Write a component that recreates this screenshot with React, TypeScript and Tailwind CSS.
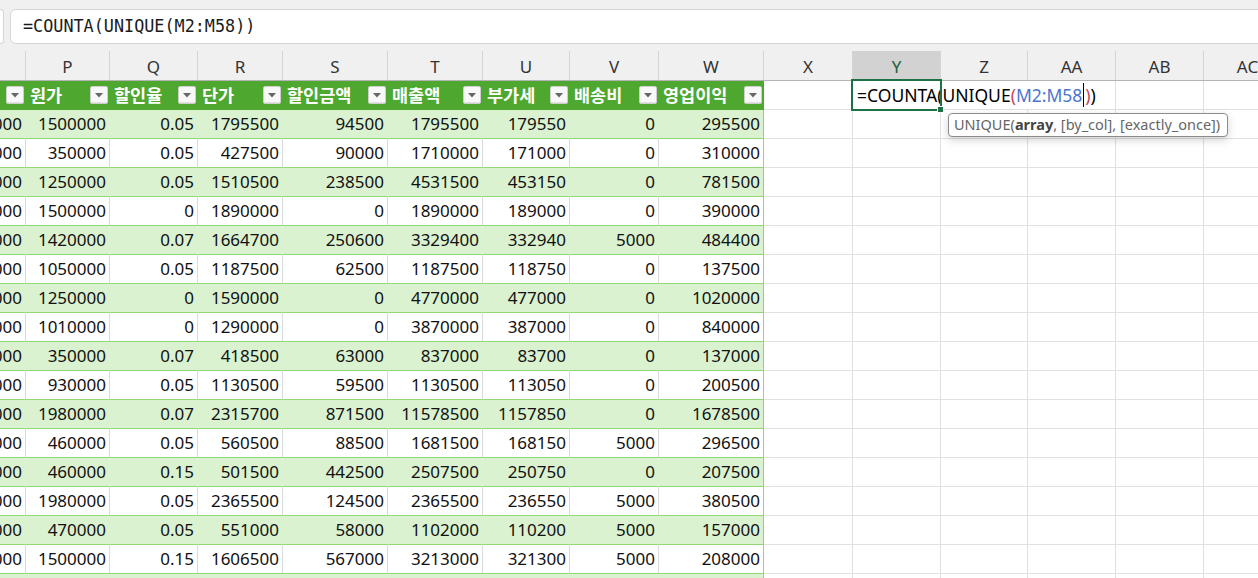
// Excel-style sheet view: formula bar, column letters, a green banded table
// with filter buttons, and an in-cell formula edit with its argument tip.

type Col = { w: string; l: string };

const COLS: Col[] = [
  { w: "w-[26px]", l: "O" },
  { w: "w-[84px]", l: "P" },
  { w: "w-[88px]", l: "Q" },
  { w: "w-[85px]", l: "R" },
  { w: "w-[105px]", l: "S" },
  { w: "w-[95px]", l: "T" },
  { w: "w-[87px]", l: "U" },
  { w: "w-[89px]", l: "V" },
  { w: "w-[105px]", l: "W" },
  { w: "w-[89px]", l: "X" },
  { w: "w-[88px]", l: "Y" },
  { w: "w-[87px]", l: "Z" },
  { w: "w-[88px]", l: "AA" },
  { w: "w-[88px]", l: "AB" },
  { w: "w-[88px]", l: "AC" },
];

const HEADERS = ["", "원가", "할인율", "단가", "할인금액", "매출액", "부가세", "배송비", "영업이익"];

// first value is the clipped column on the far left
const ROWS: string[][] = [
  ["1890000", "1500000", "0.05", "1795500", "94500", "1795500", "179550", "0", "295500"],
  ["1800000", "350000", "0.05", "427500", "90000", "1710000", "171000", "0", "310000"],
  ["1590000", "1250000", "0.05", "1510500", "238500", "4531500", "453150", "0", "781500"],
  ["1890000", "1500000", "0", "1890000", "0", "1890000", "189000", "0", "390000"],
  ["1790000", "1420000", "0.07", "1664700", "250600", "3329400", "332940", "5000", "484400"],
  ["1250000", "1050000", "0.05", "1187500", "62500", "1187500", "118750", "0", "137500"],
  ["1590000", "1250000", "0", "1590000", "0", "4770000", "477000", "0", "1020000"],
  ["1290000", "1010000", "0", "1290000", "0", "3870000", "387000", "0", "840000"],
  ["450000", "350000", "0.07", "418500", "63000", "837000", "83700", "0", "137000"],
  ["1190000", "930000", "0.05", "1130500", "59500", "1130500", "113050", "0", "200500"],
  ["2490000", "1980000", "0.07", "2315700", "871500", "11578500", "1157850", "0", "1678500"],
  ["590000", "460000", "0.05", "560500", "88500", "1681500", "168150", "5000", "296500"],
  ["590000", "460000", "0.15", "501500", "442500", "2507500", "250750", "0", "207500"],
  ["2490000", "1980000", "0.05", "2365500", "124500", "2365500", "236550", "5000", "380500"],
  ["580000", "470000", "0.05", "551000", "58000", "1102000", "110200", "5000", "157000"],
  ["1890000", "1500000", "0.15", "1606500", "567000", "3213000", "321300", "5000", "208000"],
  ["1590000", "", "", "", "", "", "", "", ""],
];

function FilterButton() {
  return (
    <div className="absolute right-[1px] top-[5px] flex h-[18px] w-[18px] items-center justify-center rounded-[2px] border border-[#cfcfcf] bg-[#f8f8f8] shadow-[inset_0_-1px_0_#e2e2e2]">
      <svg width="8" height="5" viewBox="0 0 8 5">
        <path d="M0 0 L8 0 L4 4.5 Z" fill="#666" />
      </svg>
    </div>
  );
}

function ColumnLetters() {
  return (
    <div className="flex h-[30px] border-b border-[#b4b4b4] bg-[#f0f0f0]">
      {COLS.map((c) => (
        <div
          key={c.l}
          className={
            c.w +
            " flex shrink-0 items-center justify-center overflow-hidden whitespace-nowrap border-r border-[#d4d4d4] pt-[2px] text-[17px] " +
            (c.l === "Y" ? "bg-[#d2d2d2] text-[#215f3d]" : "text-[#333]")
          }
        >
          {c.l === "O" ? "" : c.l}
        </div>
      ))}
    </div>
  );
}

function EditingCell() {
  return (
    <div className="relative z-10 h-full">
      <span className="absolute left-0 top-0 flex h-[28px] items-center whitespace-nowrap bg-white pl-[4px] pr-[6px] text-[17.5px] text-black">
        =COUNTA(UNIQUE<span className="text-[#c8465a]">(</span>
        <span className="text-[#4c74cf]">M2:M58</span>
        <span className="mx-[1px] inline-block h-[24px] w-px bg-black" />
        <span className="text-[#c8465a]">)</span>)
      </span>
      <div className="absolute -left-[2px] -top-[2px] h-[32px] w-[91px] border-2 border-[#1e7145]">
        <div className="absolute -bottom-[4px] -right-[4px] h-[7px] w-[7px] border border-white bg-[#1e7145]" />
      </div>
    </div>
  );
}

function HeaderRow() {
  return (
    <div className="flex h-[29px]">
      {COLS.map((c, j) =>
        j <= 8 ? (
          <div
            key={c.l}
            className={
              c.w +
              " relative flex shrink-0 items-center overflow-hidden border-b border-r border-[#4ea72e] bg-[#4ea72e] pl-[4px] font-['Noto_Sans_CJK_KR',sans-serif] text-[17.5px] font-bold text-white"
            }
          >
            {HEADERS[j]}
            <FilterButton />
          </div>
        ) : (
          <div key={c.l} className={c.w + " shrink-0 border-b border-r border-[#e1e1e1] bg-white"}>
            {c.l === "Y" ? <EditingCell /> : null}
          </div>
        ),
      )}
    </div>
  );
}

function DataRow({ vals, band }: { vals: string[]; band: boolean }) {
  return (
    <div className="flex h-[29px] shrink-0">
      {COLS.map((c, j) => {
        if (j > 8) {
          return <div key={c.l} className={c.w + " shrink-0 border-b border-r border-[#e1e1e1]"} />;
        }
        const right =
          j === 8
            ? " border-r-[#8ed973]"
            : band
              ? " border-r-[#daf2d0]"
              : " border-r-[#dadada]";
        return (
          <div
            key={c.l}
            className={
              c.w +
              " flex shrink-0 items-center justify-end overflow-hidden whitespace-nowrap border-b border-r border-b-[#8ed973] pr-[3px] text-[17px] text-[#111]" +
              right +
              (band ? " bg-[#daf2d0]" : " bg-white")
            }
          >
            {vals[j]}
          </div>
        );
      })}
    </div>
  );
}

export default function App() {
  return (
    <div className="relative h-[578px] w-[1258px] overflow-hidden bg-white font-['Noto_Sans','Noto_Sans_CJK_KR',sans-serif]">
      {/* formula bar */}
      <div className="flex h-[51px] items-start bg-[#f0f0f0] pt-[9px]">
        <div className="mr-[6px] h-[35px] w-[4px] rounded-r-[6px] border border-l-0 border-[#d6d6d6] bg-white" />
        <div className="-mr-[12px] flex h-[35px] flex-1 items-center rounded-[6px] border border-[#d6d6d6] bg-white pl-[12px] font-['DejaVu_Sans_Mono',monospace] text-[16.8px] text-[#1a1a1a]">
          =COUNTA(UNIQUE(M2:M58))
        </div>
      </div>

      <ColumnLetters />
      <HeaderRow />
      {ROWS.map((r, i) => (
        <DataRow key={i} vals={r} band={i % 2 === 0} />
      ))}

      {/* argument tip under the edited cell */}
      <div className="absolute left-[948px] top-[113px] flex h-[24px] w-[280px] items-center rounded-[4px] border border-[#8c8c8c] bg-white pl-[5px] text-[14.5px] text-[#666] shadow-[0_3px_8px_rgba(0,0,0,0.18)]">
        UNIQUE(<span className="font-bold text-[#444]">array</span>, [by_col], [exactly_once])
      </div>
    </div>
  );
}
